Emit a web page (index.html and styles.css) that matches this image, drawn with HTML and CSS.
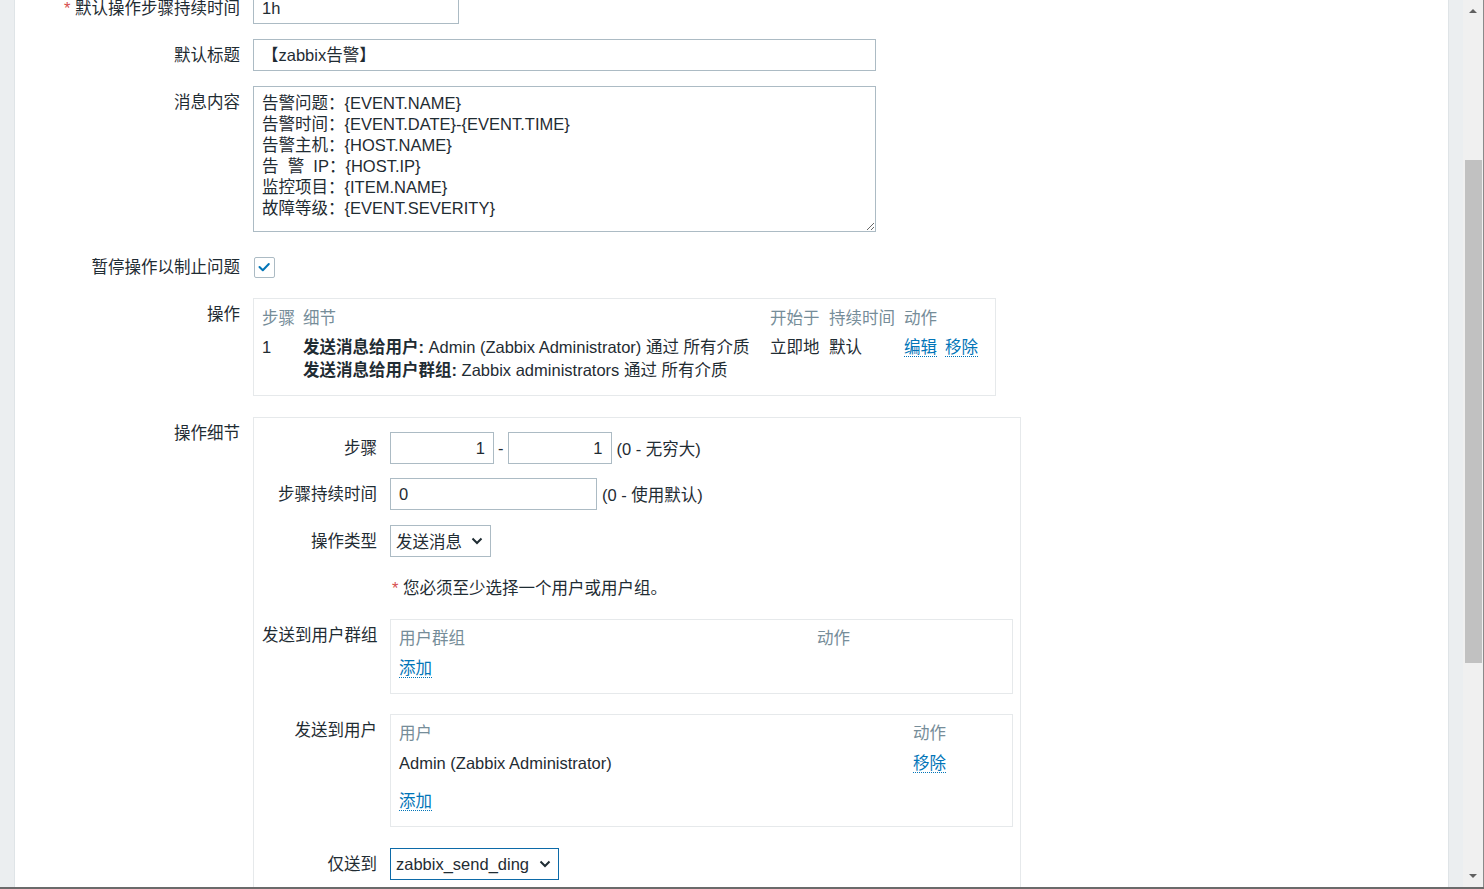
FILE: index.html
```html
<!DOCTYPE html>
<html lang="zh-CN">
<head>
<meta charset="utf-8">
<title>Zabbix 动作</title>
<link rel="stylesheet" href="styles.css">
</head>
<body>
<div class="app">
  <div class="side-left"></div>
  <main class="content">
    <div class="form">
      <div class="row">
        <div class="label"><span class="req">*</span> 默认操作步骤持续时间</div>
        <div class="field"><div class="input w205">1h</div></div>
      </div>
      <div class="row">
        <div class="label">默认标题</div>
        <div class="field"><div class="input w622">【zabbix告警】</div></div>
      </div>
      <div class="row top row-text">
        <div class="label">消息内容</div>
        <div class="field">
          <textarea class="textarea" spellcheck="false">告警问题：{EVENT.NAME}
告警时间：{EVENT.DATE}-{EVENT.TIME}
告警主机：{HOST.NAME}
告  警  IP：{HOST.IP}
监控项目：{ITEM.NAME}
故障等级：{EVENT.SEVERITY}</textarea>
        </div>
      </div>
      <div class="row row-check">
        <div class="label">暂停操作以制止问题</div>
        <div class="field">
          <span class="checkbox"><svg width="20" height="20" viewBox="0 0 20 20"><path d="M5.5 10 L8.8 13.3 L14.8 7" fill="none" stroke="#0275b8" stroke-width="2" stroke-linecap="round" stroke-linejoin="round"/></svg></span>
        </div>
      </div>
      <div class="row top row-ops">
        <div class="label">操作</div>
        <div class="field">
          <div class="box ops-box">
            <table class="tbl ops">
              <colgroup><col class="c1"><col class="c2"><col class="c3"><col class="c4"><col></colgroup>
              <thead><tr><th>步骤</th><th>细节</th><th>开始于</th><th>持续时间</th><th>动作</th></tr></thead>
              <tbody><tr>
                <td>1</td>
                <td><b>发送消息给用户:</b> Admin (Zabbix Administrator) 通过 所有介质<br><b>发送消息给用户群组:</b> Zabbix administrators 通过 所有介质</td>
                <td>立即地</td>
                <td>默认</td>
                <td><a class="link">编辑</a><a class="link gap">移除</a></td>
              </tr></tbody>
            </table>
          </div>
        </div>
      </div>
      <div class="row top">
        <div class="label">操作细节</div>
        <div class="field">
          <div class="box detail">
            <div class="irow r1">
              <div class="ilabel">步骤</div>
              <div class="ifield">
                <div class="input w103 num">1</div><span class="dash">-</span><div class="input w103 num">1</div><span class="hint">(0 - 无穷大)</span>
              </div>
            </div>
            <div class="irow r2">
              <div class="ilabel">步骤持续时间</div>
              <div class="ifield"><div class="input w206">0</div><span class="hint">(0 - 使用默认)</span></div>
            </div>
            <div class="irow r3">
              <div class="ilabel">操作类型</div>
              <div class="ifield">
                <div class="select w100"><span>发送消息</span><svg width="12" height="8" viewBox="0 0 12 8"><path d="M1.5 1.5 L6 6 L10.5 1.5" fill="none" stroke="#1f2c33" stroke-width="2"/></svg></div>
              </div>
            </div>
            <div class="irow r4">
              <div class="ilabel"></div>
              <div class="ifield"><span class="warn"><span class="req">*</span> 您必须至少选择一个用户或用户组。</span></div>
            </div>
            <div class="irow top r5">
              <div class="ilabel">发送到用户群组</div>
              <div class="ifield">
                <div class="box sub">
                  <table class="tbl">
                    <colgroup><col class="g1"><col></colgroup>
                    <thead><tr><th>用户群组</th><th>动作</th></tr></thead>
                    <tbody><tr class="add1"><td colspan="2"><a class="link">添加</a></td></tr></tbody>
                  </table>
                </div>
              </div>
            </div>
            <div class="irow top r6">
              <div class="ilabel">发送到用户</div>
              <div class="ifield">
                <div class="box sub">
                  <table class="tbl">
                    <colgroup><col class="u1"><col></colgroup>
                    <thead><tr><th>用户</th><th>动作</th></tr></thead>
                    <tbody>
                      <tr class="urow"><td>Admin (Zabbix Administrator)</td><td><a class="link">移除</a></td></tr>
                      <tr class="add2"><td colspan="2"><a class="link">添加</a></td></tr>
                    </tbody>
                  </table>
                </div>
              </div>
            </div>
            <div class="irow r7">
              <div class="ilabel">仅送到</div>
              <div class="ifield">
                <div class="select w168 focus"><span>zabbix_send_ding</span><svg width="12" height="8" viewBox="0 0 12 8"><path d="M1.5 1.5 L6 6 L10.5 1.5" fill="none" stroke="#1f2c33" stroke-width="2"/></svg></div>
              </div>
            </div>
          </div>
        </div>
      </div>
    </div>
  </main>
  <div class="side-right"></div>
  <div class="scrollbar">
    <div class="arrow up"></div>
    <div class="track"><div class="thumb"></div></div>
    <div class="arrow down"></div>
  </div>
</div>
<div class="bottom-line"></div>
</body>
</html>
```

FILE: styles.css
```css
html, body {
  margin: 0;
  padding: 0;
  height: 889px;
  overflow: hidden;
  background: #ffffff;
}
body {
  font-family: "Liberation Sans", "Noto Sans CJK SC", sans-serif;
  font-size: 16.5px;
  color: #1f2c33;
}
.app {
  display: flex;
  height: 887px;
}
.side-left {
  width: 14px;
  flex: none;
  background: #ebeef0;
  border-right: 1px solid #dfe4e7;
}
.content {
  flex: 1;
  overflow: hidden;
  background: #ffffff;
}
.side-right {
  width: 14px;
  flex: none;
  background: #ebeef0;
  border-left: 1px solid #dfe4e7;
}
.scrollbar {
  width: 20px;
  flex: none;
  background: #f0f0f0;
  border-right: 1px solid #8a8a8a;
  display: flex;
  flex-direction: column;
  align-items: center;
}
.arrow {
  width: 0;
  height: 0;
  border-left: 4px solid transparent;
  border-right: 4px solid transparent;
}
.arrow.up {
  border-bottom: 4px solid #606060;
  margin-top: 9px;
}
.arrow.down {
  border-top: 4px solid #606060;
  margin-bottom: 9px;
}
.track {
  flex: 1;
  width: 100%;
  padding-top: 147px;
}
.thumb {
  width: 17px;
  height: 503px;
  margin-left: 2px;
  background: #c1c1c1;
}
.bottom-line {
  height: 2px;
  background: #6b6b6b;
}

/* form */
.form {
  margin-top: -8px;
}
.row {
  display: flex;
  align-items: center;
  margin-bottom: 15px;
}
.row.top {
  align-items: flex-start;
}
.row-text {
  margin-bottom: 19px;
}
.row-check {
  height: 32px;
}
.row-ops {
  margin-bottom: 21px;
}
.label {
  width: 225px;
  flex: none;
  margin-right: 13px;
  text-align: right;
  line-height: 22px;
  white-space: nowrap;
}
.row.top > .label {
  padding-top: 5px;
}
.req {
  color: #d64e4e;
}
.field {
  flex: 1;
  min-width: 0;
}
.input {
  box-sizing: border-box;
  height: 32px;
  border: 1px solid #acbbc4;
  padding: 0 8px;
  line-height: 30px;
  background: #fff;
  white-space: nowrap;
}
.input.num {
  text-align: right;
}
.w205 { width: 206px; }
.w622 { width: 623px; }
.w103 { width: 104px; }
.w206 { width: 207px; }
.w100 { width: 101px; }
.w168 { width: 169px; }

.textarea {
  display: block;
  box-sizing: border-box;
  width: 623px;
  height: 146px;
  margin: 0;
  border: 1px solid #acbbc4;
  padding: 6px 8px;
  font-family: "Liberation Sans", "Noto Sans CJK SC", sans-serif;
  font-size: 16.5px;
  line-height: 21px;
  color: #1f2c33;
  background: #fff;
  outline: none;
}
.checkbox {
  display: block;
  box-sizing: border-box;
  width: 21px;
  height: 21px;
  margin-left: 1px;
  border: 1px solid #acbbc4;
  border-radius: 2px;
  background: #fff;
}
.checkbox svg {
  display: block;
  margin: -1px 0 0 -1px;
}

.box {
  box-sizing: border-box;
  border: 1px solid #e6e9eb;
  background: #fff;
}
.ops-box {
  width: 743px;
  padding: 0 8px;
}
.tbl {
  width: 100%;
  border-collapse: collapse;
  table-layout: fixed;
}
.tbl th {
  text-align: left;
  font-weight: normal;
  color: #768d99;
  padding: 7px 0 4px;
  line-height: 22px;
  white-space: nowrap;
}
.tbl td {
  text-align: left;
  vertical-align: top;
  padding: 4px 0;
  line-height: 22px;
  white-space: nowrap;
}
.ops th {
  padding: 8px 0 6px;
  line-height: 22px;
}
.ops td {
  padding: 1px 0 13px;
  line-height: 23px;
}
.ops b {
  font-weight: bold;
}
.c1 { width: 41px; }
.c2 { width: 467px; }
.c3 { width: 59px; }
.c4 { width: 75px; }
.link {
  color: #0275b8;
  text-decoration: none;
  border-bottom: 1px dotted #0275b8;
  cursor: pointer;
}
.link.gap {
  margin-left: 8px;
}

.detail {
  width: 768px;
  height: 520px;
  padding: 14px 7px 0 8px;
}
.irow {
  display: flex;
  align-items: center;
  margin-bottom: 14px;
}
.irow.top {
  align-items: flex-start;
}
.ilabel {
  width: 115px;
  flex: none;
  margin-right: 13px;
  text-align: right;
  line-height: 22px;
  white-space: nowrap;
}
.irow.top > .ilabel {
  padding-top: 5px;
}
.ifield {
  flex: 1;
  display: flex;
  align-items: center;
  min-width: 0;
}
.r2 { margin-bottom: 15px; }
.r4 { height: 32px; margin-bottom: 16px; }
.r5 { margin-bottom: 20px; }
.r6 { margin-bottom: 21px; }
.dash {
  margin: 0 4px;
}
.hint {
  margin-left: 5px;
  white-space: nowrap;
}
.warn {
  margin-left: 2px;
  white-space: nowrap;
}
.select {
  box-sizing: border-box;
  height: 32px;
  border: 1px solid #acbbc4;
  padding: 0 7px 0 5px;
  display: flex;
  align-items: center;
  justify-content: space-between;
  white-space: nowrap;
  background: #fff;
}
.select svg {
  flex: none;
}
.select.focus {
  border-color: #0c6aa8;
}
.sub {
  width: 623px;
  padding: 0 8px;
}
.g1 { width: 418px; }
.u1 { width: 514px; }
.add1 td {
  padding: 4px 0 14px;
}
.urow td {
  padding: 4px 0;
}
.add2 td {
  padding: 12px 0 14px;
}
```
